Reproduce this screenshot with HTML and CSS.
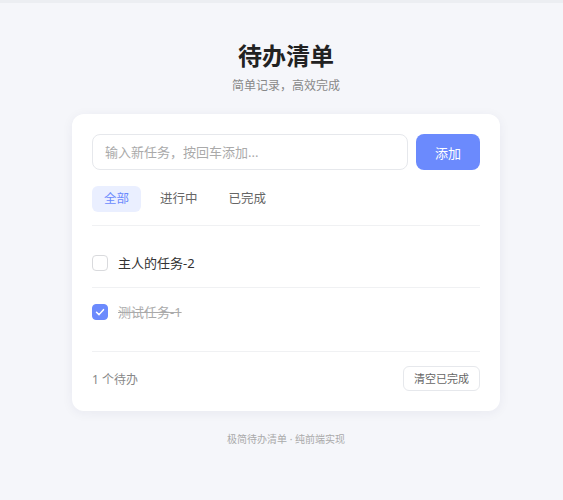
FILE: index.html
```html
<!DOCTYPE html>
<html lang="zh-CN">
<head>
<meta charset="utf-8">
<title>待办清单</title>
<link rel="stylesheet" href="styles.css">
</head>
<body>
<div class="page">
  <header class="head">
    <h1 class="title">待办清单</h1>
    <p class="subtitle">简单记录，高效完成</p>
  </header>
  <main class="card">
    <div class="add-row">
      <input class="new-input" type="text" placeholder="输入新任务，按回车添加...">
      <button class="add-btn">添加</button>
    </div>
    <nav class="tabs">
      <span class="tab active">全部</span>
      <span class="tab">进行中</span>
      <span class="tab">已完成</span>
    </nav>
    <ul class="list">
      <li class="item">
        <span class="check"></span>
        <span class="label">主人的任务-2</span>
      </li>
      <li class="item done">
        <span class="check checked">
          <svg viewBox="0 0 16 16" width="16" height="16"><path d="M4 8.2 L6.9 11 L12 5.3" fill="none" stroke="#fff" stroke-width="1.7" stroke-linecap="round" stroke-linejoin="round"/></svg>
        </span>
        <span class="label">测试任务-1</span>
      </li>
    </ul>
    <div class="card-foot">
      <span class="count">1 个待办</span>
      <button class="clear-btn">清空已完成</button>
    </div>
  </main>
  <footer class="page-foot">极简待办清单 · 纯前端实现</footer>
</div>
</body>
</html>
```
FILE: styles.css
```css
* { box-sizing: border-box; }
html, body { margin: 0; padding: 0; }
body {
  background: #f5f6fa;
  border-top: 3px solid #eceef2;
  font-family: "Noto Sans", "Noto Sans CJK SC", sans-serif;
  color: #333;
  padding-left: 9px;
}
.page {
  width: 428px;
  margin: 0 auto;
  padding-top: 37px;
}
.head { text-align: center; }
.title {
  margin: 0;
  font-size: 24px;
  line-height: 32px;
  font-weight: 700;
  color: #222;
}
.subtitle {
  margin: 4px 0 0;
  font-size: 12px;
  line-height: 20px;
  color: #888;
}
.card {
  margin-top: 18px;
  background: #fff;
  border-radius: 12px;
  box-shadow: 0 2px 12px rgba(30, 40, 80, 0.06);
  padding: 20px 20px 20px;
}
.add-row {
  display: flex;
  gap: 8px;
}
.new-input {
  flex: 1;
  height: 36px;
  border: 1px solid #e6e8ec;
  border-radius: 8px;
  padding: 0 12px;
  font-family: inherit;
  font-size: 13px;
  color: #333;
  outline: none;
}
.new-input::placeholder { color: #aaa; }
.add-btn {
  width: 64px;
  height: 36px;
  border: none;
  border-radius: 8px;
  background: #6b8afd;
  color: #fff;
  font-family: inherit;
  font-size: 13px;
}
.tabs {
  display: flex;
  gap: 7px;
  margin-top: 16px;
  padding-bottom: 13px;
  border-bottom: 1px solid #f0f1f3;
}
.tab {
  padding: 4px 12px;
  font-size: 12.5px;
  line-height: 18px;
  color: #666;
  border-radius: 6px;
}
.tab.active {
  background: #eaefff;
  color: #6b8afd;
}
.list {
  list-style: none;
  margin: 0;
  padding: 13px 0 15px;
}
.item {
  display: flex;
  align-items: center;
  gap: 10px;
  padding: 14px 0;
  border-bottom: 1px solid #f0f1f3;
}
.item:last-child { border-bottom: none; }
.check {
  width: 16px;
  height: 16px;
  border: 1.5px solid #d9dadd;
  border-radius: 4px;
  display: flex;
  align-items: center;
  justify-content: center;
  flex-shrink: 0;
}
.check.checked {
  background: #6b8afd;
  border-color: #6b8afd;
}
.check svg { display: block; }
.label {
  font-size: 13px;
  line-height: 20px;
  color: #333;
}
.item.done .label {
  color: #aaa;
  text-decoration: line-through;
}
.card-foot {
  display: flex;
  justify-content: space-between;
  align-items: center;
  border-top: 1px solid #f0f1f3;
  padding-top: 14px;
}
.count {
  font-size: 12px;
  color: #888;
}
.clear-btn {
  background: #fff;
  border: 1px solid #e6e8ec;
  border-radius: 6px;
  padding: 3px 10px;
  font-family: inherit;
  font-size: 11px;
  line-height: 17px;
  color: #666;
}
.page-foot {
  margin-top: 20px;
  text-align: center;
  font-size: 10px;
  line-height: 16px;
  color: #aaa;
}
```
